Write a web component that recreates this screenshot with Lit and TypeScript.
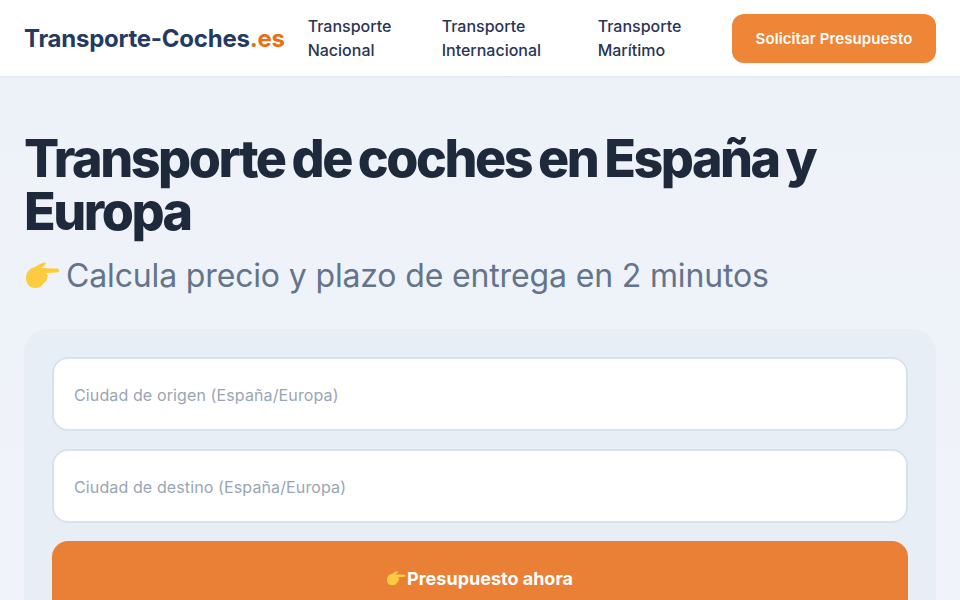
import { LitElement, html, css } from "lit";
import { customElement } from "lit/decorators.js";

const pointer = html`<svg class="hand" viewBox="0 0 34 26" aria-hidden="true"><path fill="#fdcb40" d="M0 16C0 10 4 6 9 5C12 3 15 1 18 .5C20 0 20 2 19 3L15 6L31 6.5C34 7 34 10 31 10.5L20 11C22 13 22 15 21 16C21 19 19 20 18 21C16 24 13 26 9 26C4 26 0 22 0 16Z"/></svg>`;

@customElement("app-root")
export class AppRoot extends LitElement {
  static styles = css`
    :host {
      display: block;
      height: 600px;
      overflow: hidden;
      background: linear-gradient(180deg, #edf2f8, #f0f4fa);
      font-family: Inter, "Noto Sans", sans-serif;
    }
    header {
      height: 77px;
      box-sizing: border-box;
      background: #fff;
      border-bottom: 1px solid #e4e9f0;
      box-shadow: 0 1px 2px rgba(30, 41, 59, 0.05);
      padding: 0 24px;
      display: flex;
      align-items: center;
      justify-content: space-between;
    }
    .logo {
      font-size: 24px;
      font-weight: 700;
      letter-spacing: -0.25px;
      color: #243a63;
      white-space: nowrap;
    }
    .logo span {
      color: #ea6f10;
    }
    nav {
      display: grid;
      grid-template-columns: 134px 156px auto;
      margin-left: 23px;
      margin-right: auto;
    }
    nav a {
      font-size: 16px;
      font-weight: 500;
      line-height: 24px;
      color: #2a3556;
    }
    .cta {
      width: 204px;
      height: 49px;
      border-radius: 12px;
      background: #ee8537;
      color: #fff;
      font-size: 15px;
      font-weight: 600;
      letter-spacing: 0.1px;
      display: flex;
      align-items: center;
      justify-content: center;
    }
    main {
      padding: 55px 24px 0;
    }
    h1 {
      margin: 0;
      font-size: 52px;
      line-height: 53px;
      font-weight: 800;
      letter-spacing: -2.48px;
      word-spacing: -2px;
      color: #1e293b;
    }
    .sub {
      margin: 16px 0 0;
      display: flex;
      align-items: center;
      gap: 6px;
      font-size: 32px;
      line-height: 44px;
      font-weight: 400;
      letter-spacing: -0.15px;
      color: #64748b;
    }
    .sub .hand {
      width: 34px;
      height: 26px;
      margin-left: 2px;
      margin-top: -2px;
    }
    .card {
      margin-top: 31px;
      padding: 28px;
      border-radius: 24px;
      background: #e7eef6;
      display: flex;
      flex-direction: column;
      gap: 18px;
    }
    .field {
      height: 74px;
      box-sizing: border-box;
      border: 2px solid #d8e1ef;
      border-radius: 16px;
      background: #fff;
      padding: 2px 20px 0;
      display: flex;
      align-items: center;
      font-size: 16px;
      letter-spacing: 0.12px;
      color: #9aa5b4;
    }
    .go {
      height: 74px;
      border-radius: 16px;
      background: #ea8035;
      color: #fff;
      font-size: 18px;
      font-weight: 700;
      display: flex;
      align-items: center;
      justify-content: center;
      gap: 1px;
    }
    .go .hand {
      width: 19px;
      height: 14.5px;
    }
  `;

  render() {
    return html`
      <header>
        <div class="logo">Transporte-Coches<span>.es</span></div>
        <nav>
          <a>Transporte<br />Nacional</a>
          <a>Transporte<br />Internacional</a>
          <a>Transporte<br />Marítimo</a>
        </nav>
        <div class="cta">Solicitar Presupuesto</div>
      </header>
      <main>
        <h1>Transporte de coches en España y Europa</h1>
        <p class="sub">${pointer}<span>Calcula precio y plazo de entrega en 2 minutos</span></p>
        <div class="card">
          <div class="field">Ciudad de origen (España/Europa)</div>
          <div class="field">Ciudad de destino (España/Europa)</div>
          <div class="go">${pointer}<span>Presupuesto ahora</span></div>
        </div>
      </main>
    `;
  }
}
